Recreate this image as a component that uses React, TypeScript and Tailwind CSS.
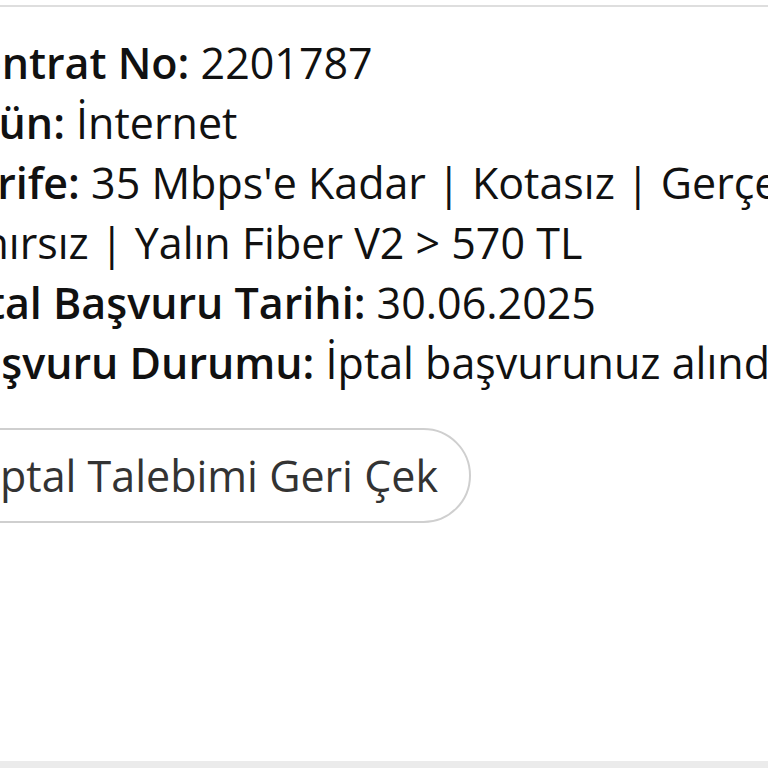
export default function App() {
  const rows = [
    { label: "Kontrat No:", value: "2201787" },
    { label: "Ürün:", value: "İnternet" },
  ];

  return (
    <div
      className="w-[768px] h-[768px] bg-white overflow-hidden flex flex-col"
      style={{ fontFamily: '"Open Sans", "Noto Sans", sans-serif' }}
    >
      {/* top divider */}
      <div className="pt-[5px]">
        <div className="border-t-2 border-[#dedede]" />
      </div>

      {/* details */}
      <div className="flex-1 ml-[-52px] pt-[26px] text-[#111111] text-[43px] leading-[60px] whitespace-nowrap">
        {rows.map((r) => (
          <div key={r.label}>
            <span className="font-semibold">{r.label}</span> {r.value}
          </div>
        ))}
        <div>
          <span className="font-semibold">Tarife:</span> 35 Mbps'e Kadar | Kotasız | Gerçek
          <br />
          Sınırsız | Yalın Fiber V2 &gt; 570 TL
        </div>
        <div>
          <span className="font-semibold">İptal Başvuru Tarihi:</span> 30.06.2025
        </div>
        <div>
          <span className="font-semibold">Başvuru Durumu:</span> İptal başvurunuz alındı.
        </div>

        <div className="mt-[35px]">
          <button className="h-[95px] rounded-full border-2 border-[#cfcfcf] bg-white pl-[38px] pr-[31px] text-[43px] text-[#333333]">
            İptal Talebimi Geri Çek
          </button>
        </div>
      </div>

      {/* bottom band */}
      <div className="h-[7px] bg-[#ebebeb]" />
    </div>
  );
}
